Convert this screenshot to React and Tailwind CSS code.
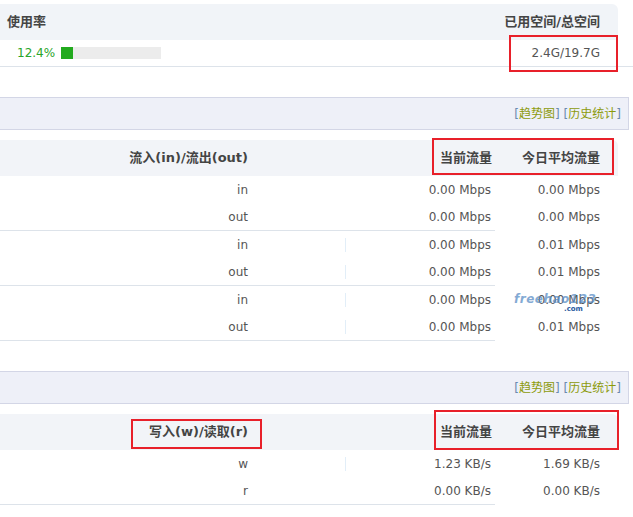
import React from 'react'

const font = { fontFamily: '"DejaVu Sans", Verdana, "Noto Sans CJK SC", sans-serif' }

function Links() {
  return (
    <div className="w-[629px] h-[33px] bg-[#eef0f8] border-y border-r border-[#d3d6e6] flex items-center justify-end pr-[7px] text-[12px]">
      <span className="text-[#6a8ab0]">[</span>
      <span className="text-[#8c9a0a]">趋势图</span>
      <span className="text-[#6a8ab0]">]</span>
      <span className="w-[4px]" />
      <span className="text-[#6a8ab0]">[</span>
      <span className="text-[#8c9a0a]">历史统计</span>
      <span className="text-[#6a8ab0]">]</span>
    </div>
  )
}

function TableHead({ label }) {
  return (
    <div className="w-[618px] h-[36px] bg-[#f2f4f8] rounded-tr-[6px] flex items-center text-[13px] font-bold text-[#444]">
      <div className="w-[248px] text-right">{label}</div>
      <div className="w-[244px] text-right">当前流量</div>
      <div className="w-[108px] text-right">今日平均流量</div>
    </div>
  )
}

function Group({ rows, sep }) {
  return (
    <div className="flex">
      <div className="w-[495px] border-b border-[#dde3ea]">
        {rows.map((r, i) => (
          <div key={i} className="h-[27px] flex items-center text-[12px] text-[#555]">
            <div className="w-[248px] text-right">{r[0]}</div>
            <div className="w-[97px]" />
            <div className={'w-px h-[14px] ' + (sep[i] ? 'bg-[#e2eef8]' : '')} />
            <div className="flex-1 text-right pr-[4px]">{r[1]}</div>
          </div>
        ))}
      </div>
      <div className="w-[105px]">
        {rows.map((r, i) => (
          <div key={i} className="h-[27px] flex items-center justify-end text-[12px] text-[#555]">{r[2]}</div>
        ))}
      </div>
    </div>
  )
}

export default function App() {
  return (
    <div className="relative w-[633px] h-[517px] bg-white overflow-hidden pt-[4px]" style={font}>
      <div className="w-[618px] h-[36px] bg-[#f1f4f8] rounded-tr-[6px] flex items-center justify-between pl-[7px] pr-[18px] text-[13px] font-bold text-[#444]">
        <span>使用率</span>
        <span>已用空间/总空间</span>
      </div>
      <div className="h-[27px] border-b border-[#dde3ea] flex items-center justify-between pl-[17px] pr-[33px] text-[12px]">
        <div className="flex items-center">
          <span className="text-[#2aa52a]">12.4%</span>
          <div className="ml-[6px] w-[100px] h-[12px] bg-[#ececec] flex">
            <div className="w-[12px] h-full bg-[#22aa1e]" />
          </div>
        </div>
        <span className="text-[#555]">2.4G/19.7G</span>
      </div>

      <div className="mt-[30px]">
        <Links />
      </div>
      <div className="mt-[10px]">
        <TableHead label="流入(in)/流出(out)" />
        <Group rows={[['in', '0.00 Mbps', '0.00 Mbps'], ['out', '0.00 Mbps', '0.00 Mbps']]} sep={[false, false]} />
        <Group rows={[['in', '0.00 Mbps', '0.01 Mbps'], ['out', '0.00 Mbps', '0.01 Mbps']]} sep={[true, true]} />
        <Group rows={[['in', '0.00 Mbps', '0.00 Mbps'], ['out', '0.00 Mbps', '0.01 Mbps']]} sep={[true, true]} />
      </div>

      <div className="mt-[30px]">
        <Links />
      </div>
      <div className="mt-[10px]">
        <TableHead label="写入(w)/读取(r)" />
        <Group rows={[['w', '1.23 KB/s', '1.69 KB/s'], ['r', '0.00 KB/s', '0.00 KB/s']]} sep={[true, false]} />
      </div>

      {/* watermark */}
      <div className="absolute left-[514px] top-[293px] leading-none pointer-events-none">
        <div className="text-[12px] font-bold italic text-[#5a8ec6] opacity-75 tracking-[0.5px]">freehao123</div>
        <div className="text-[7px] font-bold text-[#2a5aa0] ml-[50px] mt-[1px]">.com</div>
      </div>

      {/* red annotation boxes */}
      <div className="absolute left-[509px] top-[35px] w-[109px] h-[37px] border-2 border-[#e8202a]" />
      <div className="absolute left-[432px] top-[138px] w-[182px] h-[37px] border-2 border-[#e8202a]" />
      <div className="absolute left-[131px] top-[419px] w-[131px] h-[30px] border-2 border-[#e8202a]" />
      <div className="absolute left-[434px] top-[410px] w-[185px] h-[40px] border-2 border-[#e8202a]" />
    </div>
  )
}
